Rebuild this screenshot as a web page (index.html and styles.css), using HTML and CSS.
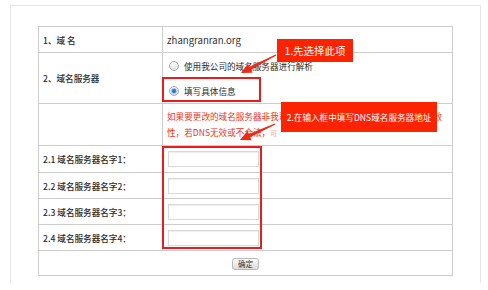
FILE: index.html
```html
<!DOCTYPE html>
<html lang="zh-CN">
<head>
  <meta charset="UTF-8">
  <title>域名服务器设置</title>
  <link rel="stylesheet" href="styles.css">
</head>
<body>
  <div class="panel">
    <div class="form-wrap">
      <table class="dns-form">
        <colgroup>
          <col class="col-label">
          <col class="col-value">
        </colgroup>
        <tr class="row-domain">
          <td class="label">1、域 名</td>
          <td class="domain">zhangranran.org</td>
        </tr>
        <tr class="row-server">
          <td class="label">2、域名服务器</td>
          <td>
            <div class="option"><span class="radio"></span>使用我公司的域名服务器进行解析</div>
            <div class="option"><span class="radio checked"></span>填写具体信息</div>
          </td>
        </tr>
        <tr class="row-notice">
          <td></td>
          <td class="notice">如果要更改的域名服务器非我司服务器，请您务必确保所填写DNS的有效<br>性，若DNS无效或不合法，<span class="faded">可</span></td>
        </tr>
        <tr class="row-input first">
          <td class="label">2.1 域名服务器名字1：</td>
          <td><input class="ns-input" type="text"></td>
        </tr>
        <tr class="row-input">
          <td class="label">2.2 域名服务器名字2：</td>
          <td><input class="ns-input" type="text"></td>
        </tr>
        <tr class="row-input">
          <td class="label">2.3 域名服务器名字3：</td>
          <td><input class="ns-input" type="text"></td>
        </tr>
        <tr class="row-input">
          <td class="label">2.4 域名服务器名字4：</td>
          <td><input class="ns-input" type="text"></td>
        </tr>
        <tr class="row-submit">
          <td colspan="2"><button class="submit-btn" type="button">确定</button></td>
        </tr>
      </table>

      <!-- 标注：红框、箭头、提示 -->
      <div class="mark mark-option"></div>
      <div class="mark mark-inputs"></div>
      <svg class="arrows" width="415" height="250" viewBox="0 0 415 250">
        <polygon transform="translate(238,29) rotate(152.8)" points="0,-0.6 29,-1.7 29,-5 39.4,0 29,5 29,1.7 0,0.6"/>
        <polygon transform="translate(237,98) rotate(155.4)" points="0,-0.6 28,-1.7 28,-5 38.5,0 28,5 28,1.7 0,0.6"/>
      </svg>
      <div class="callout callout-1">1.先选择此项</div>
      <div class="callout callout-2">2.在输入框中填写DNS域名服务器地址</div>
    </div>
  </div>
</body>
</html>
```

FILE: styles.css
```css
/* 基础 */
body {
  margin: 0;
  background: #fff;
  font-family: "Noto Sans CJK SC", "Liberation Sans", sans-serif;
  color: #2b2b2b;
}
.panel {
  box-sizing: border-box;
  width: 471px;
  height: 278px;
  margin: 5px 0 0 10px;
  padding: 20px 0 0 27px;
  border: 1px solid #e6e6e6;
  border-bottom: none;
}
.form-wrap {
  position: relative;
  width: 415px;
}
/* 表格 */
.dns-form {
  width: 415px;
  table-layout: fixed;
  border-collapse: collapse;
  font-size: 8.6px;
}
.col-label {
  width: 124px;
}
.dns-form td {
  border: 1px solid #cdcdcd;
  padding: 0 4px;
  vertical-align: middle;
}
.label {
  white-space: nowrap;
  font-weight: 500;
}
.domain {
  font-size: 9.6px;
  color: #333;
}
.row-domain { height: 26px; }
.row-server { height: 50px; }
.row-notice { height: 42px; }
.row-input { height: 26px; }
.row-input.first { height: 27px; }
.row-submit { height: 25px; }

/* 单选项 */
.option {
  display: flex;
  align-items: center;
  gap: 5px;
  height: 25px;
  padding-left: 2px;
}
.radio {
  box-sizing: border-box;
  width: 10px;
  height: 10px;
  border-radius: 50%;
  border: 1px solid #a9a9a9;
  background: linear-gradient(#fff, #e2e2e2);
  display: flex;
  align-items: center;
  justify-content: center;
}
.radio.checked::after {
  content: "";
  width: 4px;
  height: 4px;
  border-radius: 50%;
  background: #2f6fd0;
  box-shadow: 0 0 1px 1px #9cc0f0;
}

/* 提示文字 */
.notice {
  color: #ee3322;
  line-height: 16px;
  padding: 5px 4px;
}
.faded {
  color: #f0a49c;
  font-size: 7px;
}

/* 输入框 */
.ns-input {
  box-sizing: border-box;
  display: block;
  width: 91px;
  height: 16px;
  margin: 0 0 0 1px;
  border: 1px solid #d9d9d9;
  box-shadow: inset 0 1px 1px #eee;
  padding: 0;
}

/* 确定按钮 */
.row-submit td {
  text-align: center;
}
.submit-btn {
  height: 12px;
  padding: 0 5px;
  font-family: inherit;
  font-size: 7.5px;
  line-height: 10px;
  color: #333;
  border: 1px solid #b9b9b9;
  border-radius: 3px;
  background: linear-gradient(#fdfdfd, #dcdcdc);
  vertical-align: middle;
}

/* 标注层 */
.mark {
  position: absolute;
  box-sizing: border-box;
  border: 2px solid #ec1c1c;
}
.mark-option {
  left: 124px;
  top: 51px;
  width: 99px;
  height: 25px;
}
.mark-inputs {
  left: 124px;
  top: 120px;
  width: 100px;
  height: 103px;
}
.arrows {
  position: absolute;
  left: 0;
  top: 0;
  pointer-events: none;
}
.arrows polygon {
  fill: #f02a12;
}
.callout {
  position: absolute;
  display: flex;
  align-items: center;
  justify-content: center;
  background: #fb2300;
  color: #fff;
  white-space: nowrap;
}
.callout-1 {
  left: 239px;
  top: 13px;
  width: 76px;
  height: 23px;
  font-size: 10.5px;
}
.callout-2 {
  left: 243px;
  top: 76px;
  width: 156px;
  height: 30px;
  font-size: 8.6px;
}
```
